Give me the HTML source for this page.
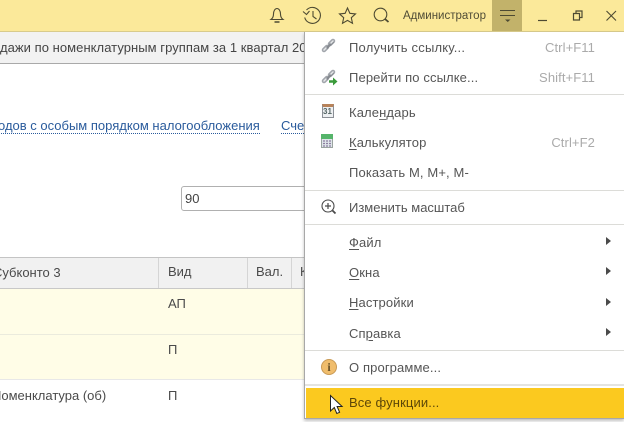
<!DOCTYPE html>
<html><head><meta charset="utf-8"><style>
html,body{margin:0;padding:0;background:#fff}
#p{position:relative;width:624px;height:422px;overflow:hidden;background:#fff;font-family:"Liberation Sans",sans-serif;font-size:13px;color:#4a4a4a}
#p div,#p span.t,#p svg{position:absolute}
.t{position:absolute;white-space:nowrap;line-height:16px}
.m{left:349px;color:#555;letter-spacing:.12px}
.s{color:#aaa;right:29px;letter-spacing:.1px}
.sep{left:305px;width:319px;height:1px;background:#dcdcd8}
.ar{left:606px;width:0;height:0;border-left:5px solid #4a4a4a;border-top:4.5px solid transparent;border-bottom:4.5px solid transparent}
u{text-decoration-thickness:1px;text-underline-offset:2px}
</style></head><body><div id="p">
<div style="left:0;top:0;width:624px;height:31px;background:#fbe99a"></div>
<div style="left:0;top:31px;width:624px;height:1px;background:#d8cb8c"></div>
<div style="left:0;top:32px;width:304px;height:31px;background:#f2f2f2"></div>
<div style="left:0;top:63px;width:304px;height:1px;background:#a9a9a9"></div>
<span class="t" style="left:0;top:40px;letter-spacing:.05px;color:#444">дажи по номенклатурным группам за 1 квартал 20</span>

<svg style="left:262px;top:0" width="130" height="32" fill="none" stroke="#4d4a32" stroke-width="1.1">
<path d="M9 19.500c2-1.500 2.500-3 2.500-5.500c0-3 1.500-5.500 3.500-5.500s3.500 2.500 3.500 5.500c0 2.500.5 4 2.500 5.500z"/><path d="M12.500 22h5" stroke-width="1.500"/>
<path d="M44.500 10a8 8 0 1 1-1.800 7.500"/><path d="M41 11.500l3.500 3l3-3.500M51 11v5.500l3.500 2.500"/>
<path d="M85.500 8l2.400 5.300l5.600.6l-4.200 3.800l1.200 5.600l-5-2.900l-5 2.900l1.200-5.600l-4.200-3.800l5.600-.6z"/>
<circle cx="118.500" cy="14.500" r="6.300"/><path d="M123 19l3.500 3" stroke-width="1.800"/>
</svg>

<span class="t" style="left:403px;top:8px;font-size:11.5px;color:#4f4c36">Администратор</span>

<div style="left:492px;top:0;width:30px;height:31px;background:#c2b26a"></div>
<svg style="left:490px;top:0" width="134" height="32" fill="none" stroke="#4d4a32">
<path d="M10 10.500h15M10 15.500h15" stroke-width="1"/><path d="M15 19.500h5.500l-2.750 2.500z" fill="#4d4a32" stroke="none"/>
<path d="M48 20.500h9" stroke-width="1.200"/>
<path d="M83.500 13.500h6v6.500h-6zM86 13.500v-2.500h6v6.500h-2.500" stroke-width="1.200"/>
<path d="M116.500 11l9.500 9.500M126 11l-9.500 9.500" stroke-width="1.100"/>
</svg>

<span class="t" style="left:-2px;top:118px;color:#2a5b9c;border-bottom:1px dotted #2a5b9c;line-height:15px">одов с особым порядком налогообложения</span>
<span class="t" style="left:281px;top:118px;color:#2a5b9c;border-bottom:1px dotted #2a5b9c;line-height:15px">Сче</span>

<div style="left:181px;top:186px;width:140px;height:23px;border:1px solid #b0b0b0;border-radius:3px;background:#fff"></div>
<span class="t" style="left:185px;top:191px;color:#444">90</span>

<div style="left:0;top:257px;width:304px;height:30px;background:#f1f1f1;border-top:1px solid #c4c4c4;border-bottom:1px solid #c8c8c8"></div>
<div style="left:158px;top:258px;width:1px;height:30px;background:#d5d5d5"></div>
<div style="left:247px;top:258px;width:1px;height:30px;background:#d5d5d5"></div>
<div style="left:291px;top:258px;width:1px;height:30px;background:#d5d5d5"></div>
<span class="t" style="left:-7px;top:265px">Субконто 3</span>
<span class="t" style="left:168px;top:264px">Вид</span>
<span class="t" style="left:256px;top:264px">Вал.</span>
<span class="t" style="left:300px;top:264px">К</span>

<div style="left:0;top:289px;width:304px;height:90px;background:#fffde7"></div>
<div style="left:0;top:334px;width:304px;height:1px;background:#ebebdd"></div>
<div style="left:0;top:379px;width:304px;height:1px;background:#e8e8e8"></div>
<span class="t" style="left:168px;top:296px">АП</span>
<span class="t" style="left:168px;top:342px">П</span>
<span class="t" style="left:-8px;top:388px">Номенклатура (об)</span>
<span class="t" style="left:168px;top:388px">П</span>

<div style="left:304px;top:32px;width:320px;height:387px;background:#fff;border-left:1px solid #a8a8a8;border-bottom:1px solid #a8a8a8;box-sizing:border-box;box-shadow:0 2px 3px rgba(0,0,0,.25)"></div>

<svg style="left:320px;top:36px" width="20" height="52" fill="none" stroke-linecap="round">
<path d="M4 14l3-3M10 8l3-3" stroke="#a2a6ac" stroke-width="4.500"/><path d="M7 12l6-6" stroke="#85898f" stroke-width="2"/><path d="M4 14l2-2M11 7l2-2" stroke="#e6e8ea" stroke-width="1.500"/>
<path d="M4 45l3-3M10 39l3-3" stroke="#a2a6ac" stroke-width="4.500"/><path d="M7 43l6-6" stroke="#85898f" stroke-width="2"/><path d="M4 45l2-2M11 38l2-2" stroke="#e6e8ea" stroke-width="1.500"/>
<path d="M9 45.500h5" stroke="#3a9a3a" stroke-width="2.500" stroke-linecap="butt"/><path d="M13 41.500l4.500 4l-4.500 4z" fill="#3a9a3a"/>
</svg>
<span class="t m" style="top:40px;letter-spacing:.2px">Получить ссылку...</span>
<span class="t s" style="top:40px">Ctrl+F11</span>
<span class="t m" style="top:70px">Перейти по ссылке...</span>
<span class="t s" style="top:70px">Shift+F11</span>
<div class="sep" style="top:94px"></div>

<div style="left:322px;top:104px;width:10px;height:10px;background:#eef0f2;border:1px solid #8b8f96;border-top:3px solid #b8835a"></div>
<span class="t" style="left:323px;top:107px;font-size:8px;line-height:10px;color:#566;font-weight:bold">31</span>
<span class="t m" style="top:105px">Кале<u style="text-decoration-color:#777">н</u>дарь</span>

<div style="left:321px;top:134px;width:12px;height:14px;background:#dfe5ea;border:1px solid #9aa4a0;box-sizing:border-box"></div>
<div style="left:321px;top:134px;width:12px;height:5px;background:#55b46a"></div>
<svg style="left:323px;top:140px" width="8" height="8"><path d="M0 1h8M0 3.500h8M0 6h8" stroke="#8c7fa0" stroke-width="1.200" stroke-dasharray="2 1"/></svg>
<span class="t m" style="top:135px"><u>К</u>алькулятор</span>
<span class="t s" style="top:135px">Ctrl+F2</span>
<span class="t m" style="top:165px">Показать М, М+, М-</span>
<div class="sep" style="top:190px"></div>

<svg style="left:320px;top:198px" width="18" height="18" fill="none" stroke="#4a4a4a">
<circle cx="8" cy="8" r="6" stroke-width="1.100"/><path d="M5 8h6M8 5v6" stroke-width="1.200"/><path d="M12.500 12.500l3 3" stroke-width="1.800"/>
</svg>
<span class="t m" style="top:200px;letter-spacing:0">Изменить масштаб</span>
<div class="sep" style="top:224px"></div>

<span class="t m" style="top:235px"><u>Ф</u>айл</span>
<div class="ar" style="top:237px"></div>
<span class="t m" style="top:265px"><u>О</u>кна</span>
<div class="ar" style="top:267px"></div>
<span class="t m" style="top:295px"><u>Н</u>астройки</span>
<div class="ar" style="top:298px"></div>
<span class="t m" style="top:326px">Сп<u>р</u>авка</span>
<div class="ar" style="top:328px"></div>
<div class="sep" style="top:350px"></div>

<div style="left:321px;top:359px;width:16px;height:16px;border-radius:50%;background:#f0bd6c;border:1px solid #c99a55;box-sizing:border-box"></div>
<span class="t" style="left:321px;top:359px;width:16px;text-align:center;font:bold 12px/16px 'Liberation Serif',serif;color:#6a5228">i</span>
<span class="t m" style="top:360px">О программе...</span>
<div class="sep" style="top:384px;height:2px;background:#e4e4e0"></div>

<div style="left:306px;top:388px;width:318px;height:30px;background:#fbc91f"></div>
<span class="t" style="left:349px;top:395px;color:#5d4708;letter-spacing:.12px">Все функции...</span>
<svg style="left:329px;top:394px" width="16" height="22"><path d="M1.500 1.500v15.500l3.800-3.500l2.500 6l2.800-1.200l-2.500-5.800h5z" fill="#fff" stroke="#222" stroke-width="1"/></svg>
</div></body></html>
